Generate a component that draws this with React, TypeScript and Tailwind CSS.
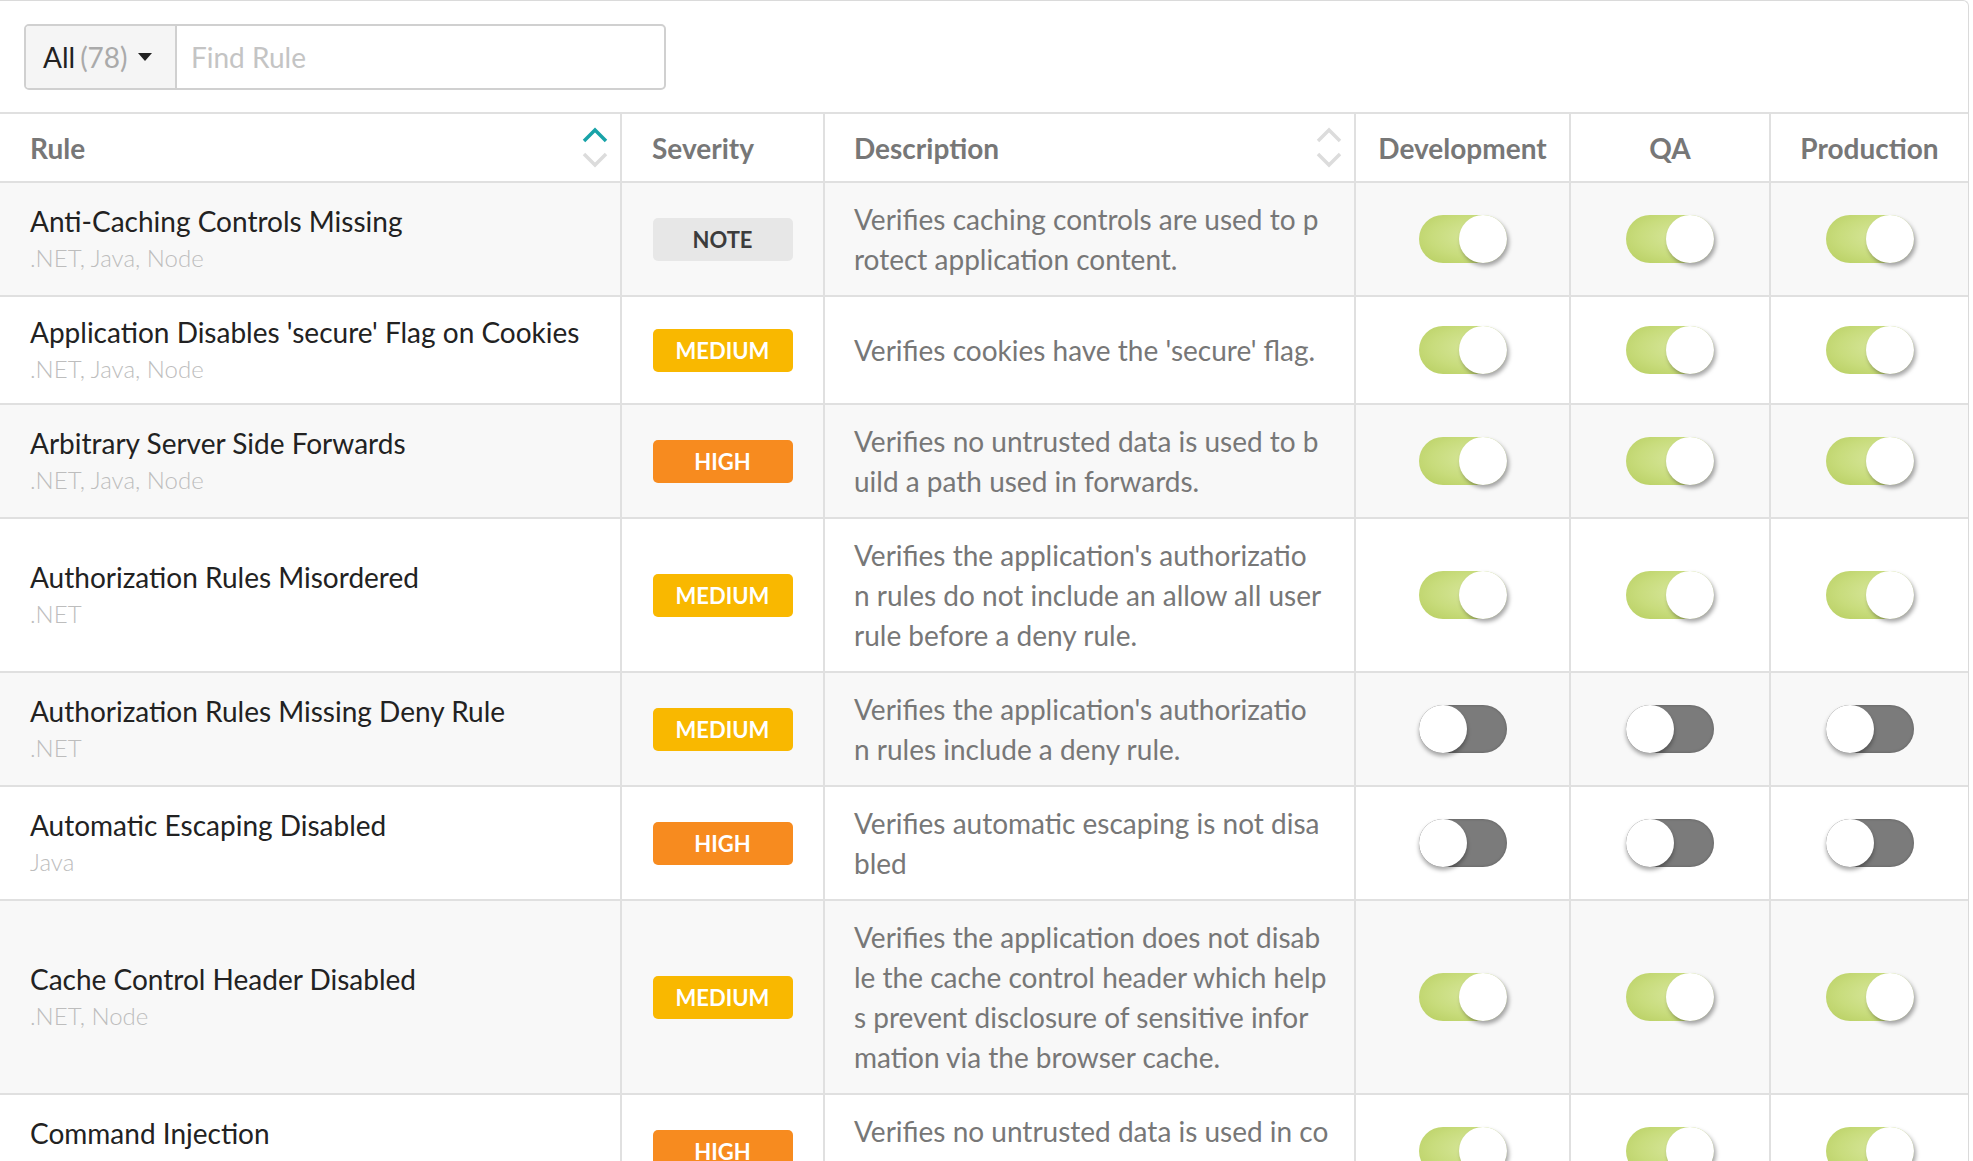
import React from "react";

type Sev = "NOTE" | "MEDIUM" | "HIGH";
type Row = { name: string; langs: string; sev: Sev; desc: string[]; on: boolean };

const rows: Row[] = [
  { name: "Anti-Caching Controls Missing", langs: ".NET, Java, Node", sev: "NOTE", desc: ["Verifies caching controls are used to p", "rotect application content."], on: true },
  { name: "Application Disables 'secure' Flag on Cookies", langs: ".NET, Java, Node", sev: "MEDIUM", desc: ["Verifies cookies have the 'secure' flag."], on: true },
  { name: "Arbitrary Server Side Forwards", langs: ".NET, Java, Node", sev: "HIGH", desc: ["Verifies no untrusted data is used to b", "uild a path used in forwards."], on: true },
  { name: "Authorization Rules Misordered", langs: ".NET", sev: "MEDIUM", desc: ["Verifies the application's authorizatio", "n rules do not include an allow all user", "rule before a deny rule."], on: true },
  { name: "Authorization Rules Missing Deny Rule", langs: ".NET", sev: "MEDIUM", desc: ["Verifies the application's authorizatio", "n rules include a deny rule."], on: false },
  { name: "Automatic Escaping Disabled", langs: "Java", sev: "HIGH", desc: ["Verifies automatic escaping is not disa", "bled"], on: false },
  { name: "Cache Control Header Disabled", langs: ".NET, Node", sev: "MEDIUM", desc: ["Verifies the application does not disab", "le the cache control header which help", "s prevent disclosure of sensitive infor", "mation via the browser cache."], on: true },
  { name: "Command Injection", langs: ".NET, Java, Node", sev: "HIGH", desc: ["Verifies no untrusted data is used in co", "mmand execution."], on: true },
];

function Badge({ sev }: { sev: Sev }) {
  const cls =
    sev === "NOTE"
      ? "bg-[#e7e7e7] text-[#3c3c3c]"
      : sev === "MEDIUM"
      ? "bg-[#f9b800] text-white"
      : "bg-[#f78b1f] text-white";
  return (
    <div className={`w-[140px] h-[43px] rounded-[5px] flex items-center justify-center text-[22px] font-bold ${cls}`}>
      {sev}
    </div>
  );
}

function Toggle({ on }: { on: boolean }) {
  return (
    <div
      className={`relative w-[88px] h-[48px] rounded-full ${
        on
          ? "bg-[radial-gradient(ellipse_at_65%_45%,#d8e79e_0%,#c8dc7c_55%,#b6cd5e_100%)]"
          : "bg-[#7b7b7b] shadow-[inset_0_0_3px_rgba(0,0,0,0.25)]"
      }`}
    >
      <div
        className={`absolute top-0 w-[48px] h-[48px] rounded-full bg-white ${
          on ? "right-0 shadow-[2px_3px_4px_rgba(0,0,0,0.35)]" : "left-0 shadow-[0_3px_4px_rgba(0,0,0,0.35)]"
        }`}
      />
    </div>
  );
}

function SortIcon({ active }: { active: boolean }) {
  return (
    <svg width="26" height="42" viewBox="0 0 26 42" className="shrink-0">
      <polyline points="2,14 13,3 24,14" fill="none" stroke={active ? "#18a3a8" : "#dcdcdc"} strokeWidth="3.5" />
      <polyline points="2,27 13,38 24,27" fill="none" stroke="#dcdcdc" strokeWidth="3.5" />
    </svg>
  );
}

export default function App() {
  return (
    <div className="w-[1973px] h-[1161px] overflow-hidden bg-white" style={{ fontFamily: "Lato, 'Open Sans', sans-serif" }}>
      <div className="w-[1969px] border-t border-r border-[#dadada] rounded-tr-[6px]">
        <div className="pl-[24px] pt-[23px] pb-[22px]">
          <div className="flex w-[642px] h-[66px] border-2 border-[#d0d0d0] rounded-[5px] overflow-hidden">
            <div className="w-[151px] flex items-center pl-[17px] bg-[#f5f5f5] border-r-2 border-[#d0d0d0] text-[28px]">
              <span className="text-[#222]">All</span>
              <span className="text-[#aaa] ml-[5px]">(78)</span>
              <svg width="14" height="8" viewBox="0 0 14 8" className="ml-[10px]">
                <polygon points="0,0 14,0 7,8" fill="#222" />
              </svg>
            </div>
            <div className="flex-1 flex items-center pl-[14px] text-[28px] text-[#c4c4c4]">Find Rule</div>
          </div>
        </div>
        <div className="grid grid-cols-[620px_203px_531px_215px_200px_199px]">
          {/* header */}
          <div className="h-[71px] border-t-2 border-b-2 border-[#e0e0e0] flex items-center justify-between pl-[30px] pr-[12px] text-[28px] font-bold text-[#777]">
            <span>Rule</span>
            <SortIcon active={true} />
          </div>
          <div className="h-[71px] border-t-2 border-b-2 border-l-2 border-[#e0e0e0] flex items-center pl-[30px] text-[28px] font-bold text-[#777]">
            Severity
          </div>
          <div className="h-[71px] border-t-2 border-b-2 border-l-2 border-[#e0e0e0] flex items-center justify-between pl-[29px] pr-[12px] text-[28px] font-bold text-[#777]">
            <span>Description</span>
            <SortIcon active={false} />
          </div>
          <div className="h-[71px] border-t-2 border-b-2 border-l-2 border-[#e0e0e0] flex items-center justify-center text-[28px] font-bold text-[#777]">
            Development
          </div>
          <div className="h-[71px] border-t-2 border-b-2 border-l-2 border-[#e0e0e0] flex items-center justify-center text-[28px] font-bold text-[#777]">
            QA
          </div>
          <div className="h-[71px] border-t-2 border-b-2 border-l-2 border-[#e0e0e0] flex items-center justify-center text-[28px] font-bold text-[#777]">
            Production
          </div>
          {rows.map((r, i) => {
            const bg = i % 2 === 0 ? "bg-[#f8f8f8]" : "bg-white";
            return (
              <React.Fragment key={r.name}>
                <div className={`${bg} border-b-2 border-[#e0e0e0] py-[16px] pl-[30px] pr-[20px] flex flex-col justify-center`}>
                  <div className="text-[28px] leading-[38px] text-[#222]">{r.name}</div>
                  <div className="text-[24px] leading-[36px] font-light text-[#bdbdbd]">{r.langs}</div>
                </div>
                <div className={`${bg} border-b-2 border-l-2 border-[#e0e0e0] flex items-center justify-center`}>
                  <Badge sev={r.sev} />
                </div>
                <div className={`${bg} border-b-2 border-l-2 border-[#e0e0e0] py-[16px] pl-[29px] pr-[20px] flex flex-col justify-center`}>
                  {r.desc.map((line) => (
                    <div key={line} className="text-[28px] leading-[40px] text-[#777] whitespace-nowrap">
                      {line}
                    </div>
                  ))}
                </div>
                <div className={`${bg} border-b-2 border-l-2 border-[#e0e0e0] flex items-center justify-center`}>
                  <Toggle on={r.on} />
                </div>
                <div className={`${bg} border-b-2 border-l-2 border-[#e0e0e0] flex items-center justify-center`}>
                  <Toggle on={r.on} />
                </div>
                <div className={`${bg} border-b-2 border-l-2 border-[#e0e0e0] flex items-center justify-center`}>
                  <Toggle on={r.on} />
                </div>
              </React.Fragment>
            );
          })}
        </div>
      </div>
    </div>
  );
}
